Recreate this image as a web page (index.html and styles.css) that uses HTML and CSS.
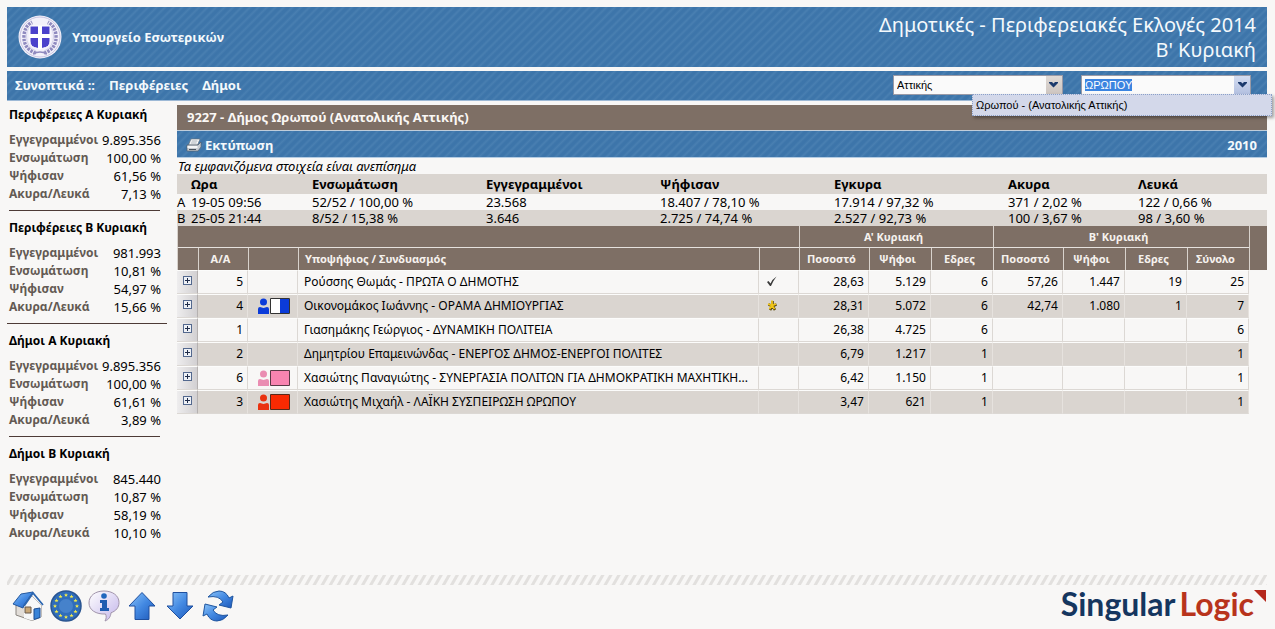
FILE: index.html
```
<!doctype html>
<html lang="el">
  <head>
    <meta charset="UTF-8" />
    <title>Δημοτικές - Περιφερειακές Εκλογές 2014</title>
    <link rel="stylesheet" href="styles.css">
  </head>

  <body>
    <header class="banner striped">
      <svg class="emblem" viewBox="0 0 44 44" aria-hidden="true">
        <circle cx="22" cy="22" r="21.5" fill="#f3f1fa" />
        <circle cx="22" cy="22" r="20" fill="none" stroke="#c9c5e2" stroke-width="1" />
        <path d="M18 38Q5 34 6 20 7 11 14 7M26 38q13-4 12-18Q37 11 30 7" fill="none" stroke="#8f8abf" stroke-width="3.4" stroke-dasharray="2.500 1" />
        <path d="M18 36Q8 32 8.500 20 9 13 15 9M26 36q10-4 9.500-16Q35 13 29 9" fill="none" stroke="#d5d2ea" stroke-width="1" />
        <path d="M15 39q7-4 14 0" fill="none" stroke="#8f8abf" stroke-width="1.500" />
        <path d="M12 11h20v15q0 5-4.500 6.500L22 34l-5.500-1.500Q12 31 12 26z" fill="#4a41cb" stroke="#fff" />
        <path d="M22 11v23M12 21h20" stroke="#fff" stroke-width="4" />
      </svg>
      <span class="ministry">Υπουργείο Εσωτερικών</span>
      <h1 class="election">Δημοτικές - Περιφερειακές Εκλογές 2014<br>Β' Κυριακή</h1>
    </header>

    <nav class="menu striped">
      <span>Συνοπτικά ::</span>
      <a href="#regions">Περιφέρειες</a>
      <a href="#municipalities">Δήμοι</a>
      <div class="filters">
        <select class="region" aria-label="Περιφέρεια">
          <option>Αττικής</option>
        </select>
        <div class="combo">
          <input type="text" id="search" value="ΩΡΩΠΟΥ" aria-label="Δήμος" autocomplete="off" />
          <button type="button" aria-label="Άνοιγμα λίστας">
            <svg viewBox="0 0 9 6"><path d="M0 0h3l1.500 1.500L6 0h3v1L4.500 5.500 0 1z" fill="#1c3a6c" /></svg>
          </button>
          <ul class="suggestions">
            <li>Ωρωπού - (Ανατολικής Αττικής)</li>
          </ul>
        </div>
      </div>
    </nav>

    <div class="content">
      <!-- National totals -->
      <aside class="sidebar">
        <h2>Περιφέρειες Α Κυριακή</h2>
        <dl>
          <dt>Εγγεγραμμένοι</dt><dd>9.895.356</dd>
          <dt>Ενσωμάτωση</dt><dd>100,00 %</dd>
          <dt>Ψήφισαν</dt><dd>61,56 %</dd>
          <dt>Ακυρα/Λευκά</dt><dd>7,13 %</dd>
        </dl>
        <hr>
        <h2>Περιφέρειες Β Κυριακή</h2>
        <dl>
          <dt>Εγγεγραμμένοι</dt><dd>981.993</dd>
          <dt>Ενσωμάτωση</dt><dd>10,81 %</dd>
          <dt>Ψήφισαν</dt><dd>54,97 %</dd>
          <dt>Ακυρα/Λευκά</dt><dd>15,66 %</dd>
        </dl>
        <hr class="wide">
        <h2>Δήμοι Α Κυριακή</h2>
        <dl>
          <dt>Εγγεγραμμένοι</dt><dd>9.895.356</dd>
          <dt>Ενσωμάτωση</dt><dd>100,00 %</dd>
          <dt>Ψήφισαν</dt><dd>61,61 %</dd>
          <dt>Ακυρα/Λευκά</dt><dd>3,89 %</dd>
        </dl>
        <hr>
        <h2>Δήμοι Β Κυριακή</h2>
        <dl>
          <dt>Εγγεγραμμένοι</dt><dd>845.440</dd>
          <dt>Ενσωμάτωση</dt><dd>10,87 %</dd>
          <dt>Ψήφισαν</dt><dd>58,19 %</dd>
          <dt>Ακυρα/Λευκά</dt><dd>10,10 %</dd>
        </dl>
      </aside>

      <main class="results">
        <h2 class="place">9227 - Δήμος Ωρωπού (Ανατολικής Αττικής)</h2>
        <div class="toolbar striped">
          <button type="button" class="print">
            <svg viewBox="0 0 16 14" aria-hidden="true">
              <path d="M5 1h9l-2.500 6H2.500z" fill="#fff" stroke="#66717d" stroke-width=".7" />
              <path d="M5.500 3h6M4.700 5h6" stroke="#8b949e" stroke-width=".8" />
              <path d="M1 7h11l3-3v5l-3 4H1z" fill="#c8cdd3" stroke="#555f6a" stroke-width=".7" />
              <path d="M1.500 8h10v2h-10z" fill="#f5f6f7" />
              <path d="M3 11.500h7" stroke="#48515b" />
            </svg>
            Εκτύπωση
          </button>
          <a href="#2010">2010</a>
        </div>
        <p class="notice">Τα εμφανιζόμενα στοιχεία είναι ανεπίσημα</p>

        <table class="summary">
          <colgroup>
            <col class="s-round"><col class="s-time"><col class="s-wide"><col class="s-wide">
            <col class="s-wide"><col class="s-wide"><col class="s-blank"><col>
          </colgroup>
          <thead>
            <tr>
              <th></th><th>Ωρα</th><th>Ενσωμάτωση</th><th>Εγγεγραμμένοι</th>
              <th>Ψήφισαν</th><th>Εγκυρα</th><th>Ακυρα</th><th>Λευκά</th>
            </tr>
          </thead>
          <tbody>
            <tr>
              <td>Α</td><td>19-05 09:56</td><td>52/52 / 100,00 %</td><td>23.568</td>
              <td>18.407 / 78,10 %</td><td>17.914 / 97,32 %</td><td>371 / 2,02 %</td><td>122 / 0,66 %</td>
            </tr>
            <tr>
              <td>Β</td><td>25-05 21:44</td><td>8/52 / 15,38 %</td><td>3.646</td>
              <td>2.725 / 74,74 %</td><td>2.527 / 92,73 %</td><td>100 / 3,67 %</td><td>98 / 3,60 %</td>
            </tr>
          </tbody>
        </table>

        <table class="grid">
          <colgroup>
            <col class="g-expand"><col class="g-num"><col class="g-num"><col><col class="g-mark">
            <col class="g-pct"><col class="g-votes"><col class="g-votes">
            <col class="g-pct"><col class="g-votes"><col class="g-votes"><col class="g-votes"><col class="g-fill">
          </colgroup>
          <thead>
            <tr>
              <th colspan="5"></th>
              <th colspan="3">Α' Κυριακή</th>
              <th colspan="4">Β' Κυριακή</th>
              <th class="fill" rowspan="2"></th>
            </tr>
            <tr>
              <th></th><th>Α/Α</th><th></th><th class="name">Υποψήφιος / Συνδυασμός</th><th></th>
              <th>Ποσοστό</th><th>Ψήφοι</th><th>Εδρες</th>
              <th>Ποσοστό</th><th>Ψήφοι</th><th>Εδρες</th><th>Σύνολο</th>
            </tr>
          </thead>
          <tbody>
            <tr>
              <td class="expand"><button type="button" aria-label="Ανάπτυξη"></button></td>
              <td>5</td><td></td>
              <td class="name">Ρούσσης Θωμάς - ΠΡΩΤΑ Ο ΔΗΜΟΤΗΣ</td>
              <td class="mark"><svg viewBox="0 0 12 12"><path d="M1 6L2.500 5 4.500 7.500Q6.500 3 10.500.5 7 5 5 10H4z" fill="#3a3a3a" /></svg></td>
              <td>28,63</td><td>5.129</td><td>6</td>
              <td>57,26</td><td>1.447</td><td>19</td><td>25</td><td class="fill"></td>
            </tr>
            <tr>
              <td class="expand"><button type="button" aria-label="Ανάπτυξη"></button></td>
              <td>4</td>
              <td class="party"><svg viewBox="0 0 32 16"><g fill="#0b3bd9"><circle cx="5.500" cy="4" r="3.500" /><path d="M0 16v-5q0-2 2-2l3.500 1L9 9q2 0 2 2v5z" /></g><path d="M12.500.5h19v15h-19z" fill="#fff" stroke="#333" /><path d="M22 1h9v14h-9z" fill="#0b3bd9" /></svg></td>
              <td class="name">Οικονομάκος Ιωάννης - ΟΡΑΜΑ ΔΗΜΙΟΥΡΓΙΑΣ</td>
              <td class="mark"><svg viewBox="0 0 12 12"><path d="M6.500 1v5M2.500 4.500l4 1.500 4-1.500M6.500 6l-2.500 4M6.500 6L9 10" fill="none" stroke="#5c4a0c" stroke-width="2.600" /><path d="M6 .5v5M2 4l4 1.500L10 4M6 5.500L3.500 9M6 5.500L8.500 9" fill="none" stroke="#f0c517" stroke-width="1.800" /></svg></td>
              <td>28,31</td><td>5.072</td><td>6</td>
              <td>42,74</td><td>1.080</td><td>1</td><td>7</td><td class="fill"></td>
            </tr>
            <tr>
              <td class="expand"><button type="button" aria-label="Ανάπτυξη"></button></td>
              <td>1</td><td></td>
              <td class="name">Γιασημάκης Γεώργιος - ΔΥΝΑΜΙΚΗ ΠΟΛΙΤΕΙΑ</td>
              <td></td>
              <td>26,38</td><td>4.725</td><td>6</td>
              <td></td><td></td><td></td><td>6</td><td class="fill"></td>
            </tr>
            <tr>
              <td class="expand"><button type="button" aria-label="Ανάπτυξη"></button></td>
              <td>2</td><td></td>
              <td class="name">Δημητρίου Επαμεινώνδας - ΕΝΕΡΓΟΣ ΔΗΜΟΣ-ΕΝΕΡΓΟΙ ΠΟΛΙΤΕΣ</td>
              <td></td>
              <td>6,79</td><td>1.217</td><td>1</td>
              <td></td><td></td><td></td><td>1</td><td class="fill"></td>
            </tr>
            <tr>
              <td class="expand"><button type="button" aria-label="Ανάπτυξη"></button></td>
              <td>6</td>
              <td class="party"><svg viewBox="0 0 32 16"><g fill="#ea8db2"><circle cx="5.500" cy="4" r="3.500" /><path d="M0 16v-5q0-2 2-2l3.500 1L9 9q2 0 2 2v5z" /></g><path d="M12.500.5h19v15h-19z" fill="#f884b0" stroke="#5a3a46" /></svg></td>
              <td class="name">Χασιώτης Παναγιώτης - ΣΥΝΕΡΓΑΣΙΑ ΠΟΛΙΤΩΝ ΓΙΑ ΔΗΜΟΚΡΑΤΙΚΗ ΜΑΧΗΤΙΚΗ...</td>
              <td></td>
              <td>6,42</td><td>1.150</td><td>1</td>
              <td></td><td></td><td></td><td>1</td><td class="fill"></td>
            </tr>
            <tr>
              <td class="expand"><button type="button" aria-label="Ανάπτυξη"></button></td>
              <td>3</td>
              <td class="party"><svg viewBox="0 0 32 16"><g fill="#ea3210"><circle cx="5.500" cy="4" r="3.500" /><path d="M0 16v-5q0-2 2-2l3.500 1L9 9q2 0 2 2v5z" /></g><path d="M12.500.5h19v15h-19z" fill="#fa2a02" stroke="#5a2a1a" /></svg></td>
              <td class="name">Χασιώτης Μιχαήλ - ΛΑΪΚΗ ΣΥΣΠΕΙΡΩΣΗ ΩΡΩΠΟΥ</td>
              <td></td>
              <td>3,47</td><td>621</td><td>1</td>
              <td></td><td></td><td></td><td>1</td><td class="fill"></td>
            </tr>
          </tbody>
        </table>
      </main>
    </div>

    <footer class="footer">
      <svg class="defs" aria-hidden="true">
        <defs>
          <linearGradient id="blue" x1="0" y1="0" x2="1" y2="1">
            <stop offset="0" stop-color="#8cc4f8" />
            <stop offset=".5" stop-color="#4389e2" />
            <stop offset="1" stop-color="#1c57b8" />
          </linearGradient>
          <linearGradient id="bubble" x1="0" y1="0" x2="1" y2="1">
            <stop offset="0" stop-color="#fff" />
            <stop offset="1" stop-color="#c3b5ea" />
          </linearGradient>
          <path id="star" d="M0-2L.6-.6 2-.6.900.4 1.300 1.800 0 1-1.300 1.800-.9.400-2-.6-.6-.6z" fill="#f2ea4c" />
        </defs>
      </svg>
      <div class="tools">
        <button type="button" aria-label="Αρχική">
          <svg viewBox="0 0 32 32">
            <path d="M4 14L20 6l9 9v12l-9 3.500L4 25z" fill="#e2ddd8" stroke="#8a8580" />
            <path d="M12 17l8-11 9 9v12l-9 3.500-8-2.500z" fill="#f7f7f8" />
            <path d="M1 14L9 4l12-2-9 13-1 3z" fill="url(#blue)" stroke="#24589f" stroke-linejoin="round" />
            <path d="M12 16L21 3l10 12" fill="none" stroke="#2c66b0" stroke-width="1.800" />
            <path d="M13 17h6v6h-6z" fill="#c9a777" stroke="#68594a" />
            <path d="M22 19l6-1v9.500l-6 2z" fill="#3b84d8" stroke="#1a4b91" />
          </svg>
        </button>
        <button type="button" aria-label="Ευρωεκλογές">
          <svg viewBox="0 0 32 32">
            <circle cx="16" cy="16" r="15" fill="#2f6dbb" stroke="#2a5590" stroke-width="1.500" />
            <circle cx="16" cy="16" r="7" fill="#4682cb" />
            <use href="#star" x="16" y="5" /><use href="#star" x="21.500" y="6.500" />
            <use href="#star" x="25.500" y="10.500" /><use href="#star" x="27" y="16" />
            <use href="#star" x="25.500" y="21.500" /><use href="#star" x="21.500" y="25.500" />
            <use href="#star" x="16" y="27" /><use href="#star" x="10.500" y="25.500" />
            <use href="#star" x="6.500" y="21.500" /><use href="#star" x="5" y="16" />
            <use href="#star" x="6.500" y="10.500" /><use href="#star" x="10.500" y="6.500" />
          </svg>
        </button>
        <button type="button" aria-label="Πληροφορίες">
          <svg viewBox="0 0 32 32">
            <path d="M16 1c8.500 0 15 4.500 15 11.500 0 5-3 8.500-8 10.300-.5 4-2 6.700-6 8.200 1.500-2.500 1.500-5 .5-7C8 24.500 1 20 1 13 1 5.500 7.500 1 16 1z" fill="url(#bubble)" stroke="#a194ab" />
            <circle cx="16" cy="6" r="2.800" fill="#1f66bd" />
            <path d="M12 10h7v8h2v3h-9v-3h2v-5h-2z" fill="#1f5cb0" />
          </svg>
        </button>
        <button type="button" aria-label="Πάνω">
          <svg viewBox="0 0 32 32"><path d="M16 2.500L29 16h-6v13.500h-14V16H3z" fill="url(#blue)" stroke="#1f4f9e" stroke-linejoin="round" /></svg>
        </button>
        <button type="button" aria-label="Κάτω">
          <svg viewBox="0 0 32 32"><path d="M16 29L3 16h6V2.500h14V16h6z" fill="url(#blue)" stroke="#1f4f9e" stroke-linejoin="round" /></svg>
        </button>
        <button type="button" aria-label="Ανανέωση">
          <svg viewBox="0 0 32 32">
            <path d="M6 7Q11 1 17 1q7 0 10 7l4-2-2 12-12-3 4-3Q17 5 6 7z" fill="url(#blue)" stroke="#1f559f" stroke-linejoin="round" />
            <path d="M26 25q-5 6-11 6-7 0-10-7l-4 2 2-12 12 3-4 3q4 7 15 5z" fill="url(#blue)" stroke="#1f559f" stroke-linejoin="round" />
          </svg>
        </button>
      </div>
      <a class="logo" href="#singularlogic">Singular<span>Logic</span><svg viewBox="0 0 12 12" aria-hidden="true"><path d="M0 0h12v12z" fill="#b5281c" /></svg></a>
    </footer>

    <script>
      const search = document.getElementById("search");
      search.focus();
      search.select();
    </script>
  </body>
</html>
```
FILE: styles.css
```
* {
  box-sizing: border-box;
}

body {
  display: flex;
  flex-direction: column;
  min-height: 100vh;
  margin: 0;
  padding: 7px 8px 7px 7px;
  background-color: #f8f7f6;
  color: #000;
  font-family: "Noto Sans", sans-serif;
  font-size: 12px;
}

button {
  padding: 0;
  border: none;
  background: none;
  font: inherit;
  cursor: pointer;
}

h1,
h2,
p,
dl,
dd,
ul {
  margin: 0;
  padding: 0;
}

.striped {
  background: repeating-linear-gradient(135deg, #3d75aa 0, #3d75aa 2px, #497fb1 4px, #3d75aa 6px);
  color: #f4f9fc;
}

/* Header */
.banner {
  display: flex;
  align-items: center;
  min-height: 60px;
  padding: 0 11px;
}

.emblem {
  width: 44px;
  height: 44px;
}

.ministry {
  margin-left: 10px;
  font-size: 13px;
  font-weight: bold;
}

.election {
  margin-left: auto;
  font-size: 20px;
  font-weight: normal;
  line-height: 25px;
  text-align: right;
}

.menu {
  display: flex;
  align-items: center;
  gap: 14px;
  min-height: 30px;
  margin-top: 4px;
  padding: 0 16px 2px 8px;
  border-bottom: 1px solid #9db9d6;
  font-size: 13px;
  font-weight: bold;
}

.menu a,
.toolbar a {
  color: inherit;
  text-decoration: none;
}

.filters {
  display: flex;
  gap: 18px;
  margin-left: auto;
}

.region,
.combo {
  width: 170px;
  height: 20px;
  border: 1px solid #9a9aa6;
  background-color: #fafafa;
  font-family: "Liberation Sans", Arial, sans-serif;
  font-size: 11px;
}

.region {
  appearance: none;
  padding: 0 20px 0 3px;
  border-radius: 0;
  color: #000;
  background-image:
    url("data:image/svg+xml,%3Csvg xmlns='http://www.w3.org/2000/svg' viewBox='0 0 9 6'%3E%3Cpath d='M0 0h3l1.5 1.5L6 0h3v1L4.500 5.500 0 1z' fill='%231c3a6c'/%3E%3C/svg%3E"),
    linear-gradient(#e0dad6, #cdc5c0);
  background-position: right 4px center, right center;
  background-size: 9px 6px, 16px 100%;
  background-repeat: no-repeat;
}

.combo {
  position: relative;
  display: flex;
}

.combo input {
  flex: 1;
  min-width: 0;
  padding: 0 3px;
  border: none;
  outline: none;
  background: none;
  font: inherit;
  font-weight: normal;
}

.combo input::selection {
  background-color: #3b84e0;
  color: #fff;
}

.combo button {
  display: flex;
  align-items: center;
  justify-content: center;
  width: 16px;
  background: linear-gradient(#d3dcf0, #b3c0e0);
}

.combo svg {
  width: 9px;
}

.suggestions {
  position: absolute;
  top: 100%;
  right: -22px;
  z-index: 1;
  width: 300px;
  border: 1px dotted #8ba0c8;
  background-color: #d3d8ea;
  box-shadow: 2px 2px 3px rgba(0, 0, 0, 0.35);
  color: #000;
  font-weight: normal;
  line-height: 20px;
  list-style: none;
}

.suggestions li {
  padding-left: 3px;
}

.content {
  display: flex;
  gap: 10px;
  margin-top: 4px;
}

/* Sidebar */
.sidebar {
  flex: none;
  width: 160px;
}

.sidebar h2 {
  margin: 0 2px 6px;
  font-size: 12px;
  line-height: 20px;
  white-space: nowrap;
}

.sidebar dl {
  display: grid;
  grid-template-columns: auto auto;
  margin: 0 6px 0 2px;
  line-height: 18px;
}

.sidebar dt {
  color: #635a53;
  font-weight: bold;
}

.sidebar dd {
  font-size: 13px;
  text-align: right;
}

.sidebar hr {
  margin: 7px 7px 7px 2px;
  border: none;
  border-top: 1px solid #4d3b36;
}

.sidebar .wide {
  margin-left: 0;
  margin-right: 0;
}

/* Results */
.results {
  flex: 1;
  min-width: 0;
}

.place {
  padding-left: 10px;
  background-color: #7e6f65;
  color: #fbf8f5;
  font-size: 13px;
  line-height: 25px;
}

.toolbar {
  display: flex;
  align-items: center;
  justify-content: space-between;
  min-height: 28px;
  padding: 1px 10px 0 9px;
  border-top: 1px solid #c0cdda;
  border-bottom: 1px solid #b3cbe2;
  font-weight: bold;
}

.toolbar a {
  font-size: 13px;
}

.print {
  display: flex;
  align-items: center;
  gap: 3px;
  color: inherit;
  font-size: 13px;
  font-weight: bold;
}

.print svg {
  width: 16px;
}

.notice {
  padding-left: 1px;
  font-size: 13px;
  font-style: italic;
  line-height: 16px;
}

table {
  width: 100%;
  border-collapse: collapse;
  table-layout: fixed;
}

th,
td {
  padding: 0;
}

.summary {
  font-size: 13px;
  line-height: 16px;
  text-align: left;
  white-space: nowrap;
}

.summary th {
  line-height: 20px;
}

.summary thead,
.summary tr:nth-child(2) {
  background-color: #dad5d0;
}

.s-round {
  width: 14px;
}

.s-time {
  width: 121px;
}

.s-wide {
  width: 174px;
}

.s-blank {
  width: 130px;
}

.grid {
  border-collapse: separate;
  border-spacing: 0;
}

.grid th {
  height: 22px;
  padding-right: 6px;
  border-left: 1px solid #d8d2cc;
  background-color: #7e6f65;
  color: #f6f2ee;
  font-size: 11px;
  line-height: 16px;
}

.grid tr:first-child th {
  border-bottom: 1px solid #e6e2de;
}

.grid tr:first-child .fill {
  border-bottom: none;
}

.grid td {
  height: 24px;
  padding-right: 4px;
  border-right: 1px solid #dcd8d4;
  border-bottom: 1px solid #dcd8d4;
  border-top: 1px solid #fcfcfb;
  line-height: 20px;
  text-align: right;
}

.grid tbody tr:nth-child(even) td {
  background-color: #dad5d0;
  border-right-color: #e6e2de;
}

.grid td.name,
.grid th.name {
  overflow: hidden;
  padding: 0 0 0 6px;
  text-align: left;
  text-overflow: ellipsis;
  white-space: nowrap;
}

.grid tbody tr:nth-child(n) .fill {
  border: none;
  background: none;
}

.grid tbody tr td.expand {
  padding: 5px 0 0 6px;
  border-right: 1px solid #b5b1b0;
  background: linear-gradient(90deg, #eeedee, #d2d0d2);
  text-align: left;
  vertical-align: top;
  line-height: 0;
}

.expand button {
  width: 9px;
  height: 9px;
  border: 1px solid #53688e;
  background:
    linear-gradient(#1f2c4a, #1f2c4a) center / 5px 1px no-repeat,
    linear-gradient(#1f2c4a, #1f2c4a) center / 1px 5px no-repeat,
    #eef1f6;
}

.grid .party {
  padding-right: 7px;
}

.grid .mark {
  padding-right: 20px;
}

.grid svg {
  display: block;
  margin-left: auto;
}

.party svg {
  width: 32px;
}

.mark svg {
  width: 12px;
}

.g-expand {
  width: 21px;
}

.g-num {
  width: 50px;
}

.g-mark {
  width: 40px;
}

.g-pct {
  width: 70px;
}

.g-votes {
  width: 62px;
}

.g-fill {
  width: 18px;
}

/* Footer */
.footer {
  display: flex;
  align-items: flex-start;
  justify-content: space-between;
  margin-top: auto;
  padding: 15px 1px 0 5px;
  background: repeating-linear-gradient(120deg, #f8f7f6 0, #f8f7f6 3px, #e2e0de 4px, #e2e0de 6px, #f8f7f6 7px) top / 100% 10px no-repeat;
}

.defs {
  position: absolute;
  width: 0;
  height: 0;
}

.tools {
  display: flex;
  gap: 6px;
}

.tools svg {
  display: block;
  width: 32px;
  height: 32px;
}

.logo {
  display: flex;
  align-items: flex-start;
  color: #15365f;
  font-family: Lato, sans-serif;
  font-size: 32px;
  font-weight: bold;
  line-height: 28px;
  text-decoration: none;
}

.logo span {
  margin-left: 4px;
  color: #b8341c;
}

.logo svg {
  width: 12px;
}
```
